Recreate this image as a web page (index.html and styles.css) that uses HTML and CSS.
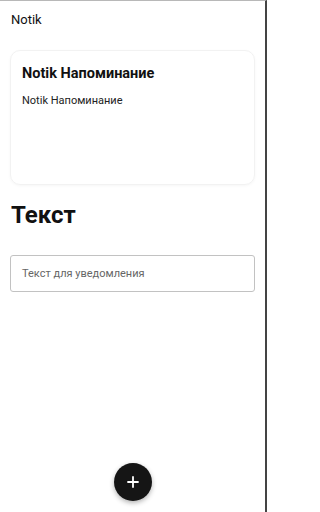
FILE: index.html
```html
<!DOCTYPE html>
<html lang="ru">
<head>
<meta charset="utf-8">
<link rel="stylesheet" href="styles.css">
</head>
<body>
<div class="screen">
  <header class="appbar">Notik</header>
  <main class="content">
    <section class="card">
      <h2 class="card-title">Notik Напоминание</h2>
      <p class="card-text">Notik Напоминание</p>
    </section>
    <h1 class="heading">Текст</h1>
    <div class="input">Текст для уведомления</div>
  </main>
  <button class="fab" aria-label="add">
    <svg width="12" height="12" viewBox="0 0 12 12"><path d="M6 1v10M1 6h10" stroke="#fff" stroke-width="1.8" stroke-linecap="round"/></svg>
  </button>
</div>
</body>
</html>
```
FILE: styles.css
```css
html, body { margin: 0; padding: 0; }
body {
  width: 267px; height: 512px; overflow: hidden;
  font-family: Roboto, "Noto Sans", sans-serif;
  background: #fff; color: #111;
}
.screen {
  position: relative;
  box-sizing: border-box;
  height: 512px;
  border-top: 1px solid #b8b8b8;
  border-right: 2px solid #444;
  background: #fff;
}
.appbar {
  padding: 11px 0 0 11px;
  height: 22px;
  font-size: 13px;
  color: #111;
}
.content { padding: 16px 10px 0 10px; }
.card {
  box-sizing: border-box;
  height: 135px;
  border-radius: 10px;
  border: 1px solid #f2f2f2;
  box-shadow: 0 1px 3px rgba(0,0,0,0.04);
  padding: 14px 11px;
}
.card-title { margin: 0; font-size: 14.5px; font-weight: 700; line-height: 17px; }
.card-text { margin: 12px 0 0; font-size: 11px; line-height: 14px; color: #222; }
.heading { margin: 16px 0 0 1px; font-size: 24px; font-weight: 700; line-height: 28px; }
.input {
  margin-top: 26px;
  box-sizing: border-box;
  height: 37px;
  border: 1px solid #c2c2c2;
  border-radius: 3px;
  padding: 0 11px;
  display: flex; align-items: center;
  font-size: 11px; color: #666;
}
.fab {
  position: absolute;
  left: 114px; top: 462px;
  width: 38px; height: 38px;
  border-radius: 50%;
  border: none; padding: 0;
  background: #151515;
  box-shadow: 0 2px 5px rgba(0,0,0,0.3);
  display: flex; align-items: center; justify-content: center;
}
```
